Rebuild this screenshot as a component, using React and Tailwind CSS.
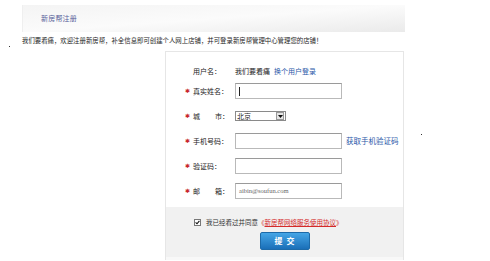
import React from "react";

const cjk = { fontFamily: '"Noto Sans CJK SC", "Liberation Sans", sans-serif' };

function Star() {
  return <span className="text-[#c8262b] text-[6px] leading-none mr-[3px]">✱</span>;
}

function Row({ star, label, children, h = "h-[16px]" }) {
  return (
    <div className={`flex items-center ${h}`}>
      <div className="w-[63px] flex items-center justify-end text-[7px] text-[#222] leading-none">
        {star && <Star />}
        <span className="w-[36px] flex justify-between">{label}</span>
      </div>
      <div className="ml-[6px] flex items-center">{children}</div>
    </div>
  );
}

function TextInput({ children }) {
  return (
    <div className="w-[107px] h-[16px] border border-[#b9b9b9] border-t-[#9a9a9a] bg-white flex items-center px-[3px]">
      {children}
    </div>
  );
}

export default function App() {
  return (
    <div className="relative w-[490px] h-[261px] bg-white overflow-hidden" style={cjk}>
      {/* header */}
      <div className="ml-[22px] mt-[5px] w-[383px] h-[27px] bg-gradient-to-br from-[#f4f4f4] via-[#fbfbfb] to-[#eaeaea] border-l border-[#efefef] flex items-center pl-[18px]">
        <span className="text-[7px] text-[#56609a] tracking-[0.2px]">新房帮注册</span>
      </div>

      <div className="ml-[22px] mt-[5px] h-[9px] flex items-center text-[6.4px] text-[#1e1e1e] leading-none whitespace-nowrap">
        我们要看痛，欢迎注册新房帮，补全信息即可创建个人网上店铺，并可登录新房帮管理中心管理您的店铺！
      </div>

      {/* panel */}
      <div className="ml-[165px] mt-[5px] w-[239px] border-l border-r border-t border-[#e6e6e6]">
        <div className="pt-[12px] pb-[8px] flex flex-col">
          <Row label={<span>用户名：</span>} h="h-[14px]">
            <span className="text-[7px] text-[#222] leading-none">我们要看痛</span>
            <span className="ml-[4px] text-[7px] text-[#2a58a8] leading-none">换个用户登录</span>
          </Row>
          <div className="mt-[5px] flex flex-col gap-[9px]">
            <Row star label={<span>真实姓名：</span>}>
              <TextInput>
                <span className="w-px h-[9px] bg-[#222]" />
              </TextInput>
            </Row>
            <Row star label={<><span>城</span><span>市：</span></>}>
              <div className="w-[51px] h-[10px] border border-[#8a8a8a] bg-white flex items-center">
                <span className="flex-1 pl-[1px] text-[7px] leading-none text-[#222]">北京</span>
                <span className="w-[8px] h-[8px] mr-[1px] bg-[#e6e6e6] border border-[#999] flex items-center justify-center">
                  <svg width="5" height="3" viewBox="0 0 5 3"><path d="M0 0h5L2.5 3z" fill="#111" /></svg>
                </span>
              </div>
            </Row>
            <Row star label={<span>手机号码：</span>}>
              <TextInput />
              <span className="ml-[4px] text-[7.5px] text-[#2a58a8] leading-none whitespace-nowrap">获取手机验证码</span>
            </Row>
            <Row star label={<span>验证码：</span>}>
              <TextInput />
            </Row>
            <Row star label={<><span>邮</span><span>箱：</span></>}>
              <TextInput>
                <span className="text-[6.5px] text-[#666] leading-none" style={{ fontFamily: '"Liberation Serif", serif' }}>
                  aibin@soufun.com
                </span>
              </TextInput>
            </Row>
          </div>
        </div>

        <div className="bg-[#f1f1f1] h-[50px] flex flex-col items-center pt-[11px]">
          <div className="flex items-center self-start ml-[28px] h-[8px]">
            <span className="w-[7px] h-[7px] border border-[#777] bg-white flex items-center justify-center">
              <svg width="5" height="5" viewBox="0 0 5 5"><path d="M0.6 2.4 2 3.8 4.4 0.8" stroke="#111" strokeWidth="1.1" fill="none" /></svg>
            </span>
            <span className="ml-[5px] text-[6.5px] text-[#333] leading-none whitespace-nowrap">
              我已经看过并同意
              <span className="text-[#d42a2a]">《<span className="underline">新房帮网络服务使用协议</span>》</span>
            </span>
          </div>
          <button className="mt-[6px] w-[50px] h-[18px] rounded-[2px] bg-gradient-to-b from-[#45a6e6] to-[#1a6fb8] border border-[#1d6aa8] text-white text-[8px] font-bold leading-none tracking-[4px] pl-[4px]">
            提交
          </button>
        </div>
        <div className="h-[3px] bg-[#f8f8f8]" />
      </div>

      <span className="absolute left-[9px] top-[46px] w-px h-px bg-[#333]" />
      <span className="absolute left-[421px] top-[134px] w-px h-px bg-[#333]" />
    </div>
  );
}
